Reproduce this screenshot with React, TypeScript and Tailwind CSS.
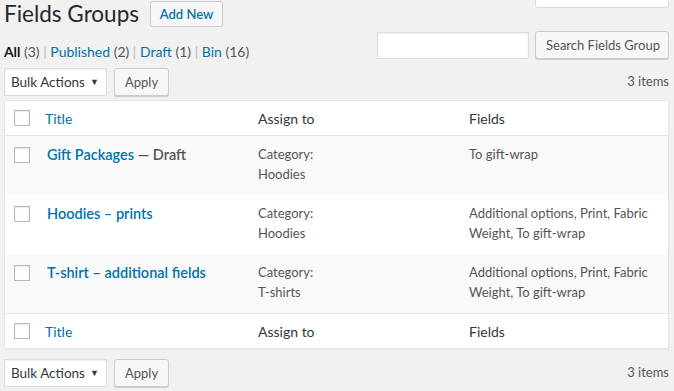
import React from 'react';

const font = "font-['Lato','Noto_Sans',sans-serif]";

const Checkbox = () => (
  <span className="block h-4 w-4 border border-[#b4b9be] bg-white shadow-[inset_0_1px_2px_rgba(0,0,0,0.1)]" />
);

const Button = ({ children, className = '' }: { children: React.ReactNode; className?: string }) => (
  <button
    className={`h-[28px] whitespace-nowrap rounded-[3px] border border-[#ccc] bg-[#f7f7f7] px-[10px] text-[13px] leading-[26px] text-[#555] shadow-[0_1px_0_#ccc] ${className}`}
  >
    {children}
  </button>
);

const TableNav = () => (
  <div className="flex h-[28px] items-center justify-between">
    <div className="flex items-center gap-[7px]">
      <div className="flex h-[28px] w-[103px] items-center justify-between whitespace-nowrap border border-[#ddd] bg-white pl-[6px] pr-[7px] text-[13.5px] text-[#32373c] shadow-[inset_0_1px_2px_rgba(0,0,0,0.07)]">
        <span>Bulk Actions</span>
        <span className="text-[9px]">▼</span>
      </div>
      <Button className="w-[55px] px-0">Apply</Button>
    </div>
    <span className="whitespace-nowrap text-[13px] text-[#555]">3 items</span>
  </div>
);

const rows = [
  { title: 'Gift Packages', state: ' — Draft', cat: 'Hoodies', fields: ['To gift-wrap'] },
  { title: 'Hoodies – prints', state: '', cat: 'Hoodies', fields: ['Additional options, Print, Fabric', 'Weight, To gift-wrap'] },
  { title: 'T-shirt – additional fields', state: '', cat: 'T-shirts', fields: ['Additional options, Print, Fabric', 'Weight, To gift-wrap'] },
];

const HeadRow = ({ top }: { top?: boolean }) => (
  <div
    className={`grid h-[35px] grid-cols-[30px_213px_211px_1fr] items-center text-[14px] text-[#32373c] ${
      top ? 'border-b border-[#e1e1e1]' : 'border-t border-[#e1e1e1]'
    }`}
  >
    <div className="pl-[9px]">
      <Checkbox />
    </div>
    <div className="px-[10px] text-[#0073aa]">Title</div>
    <div className="px-[10px]">Assign to</div>
    <div className="px-[10px]">Fields</div>
  </div>
);

export default function App() {
  return (
    <div className={`min-h-[391px] bg-[#f1f1f1] pl-[4px] pr-[5px] ${font}`}>
      <div className="flex h-[27px] items-start justify-between">
        <div className="flex items-center gap-[11px] pt-[1px]">
          <h1 className="whitespace-nowrap text-[22.5px] leading-[26px] text-[#23282d]">Fields Groups</h1>
          <span className="h-[26px] w-[73px] whitespace-nowrap rounded-[2px] border border-[#ccc] bg-[#f7f7f7] text-center text-[13px] font-semibold leading-[24px] text-[#0073aa]">
            Add New
          </span>
        </div>
        <div className="h-[8px] w-[134px] rounded-b-[3px] border-x border-b border-[#ddd] bg-white" />
      </div>

      <div className="mt-[4px] flex h-[27px] items-start justify-between">
        <div className="whitespace-nowrap pt-[13px] text-[14px] leading-[16px] text-[#bbb]">
          <span className="font-semibold text-black">All</span> <span className="text-[#555]">(3)</span> |{' '}
          <span className="text-[#0073aa]">Published</span> <span className="text-[#555]">(2)</span> |{' '}
          <span className="text-[#0073aa]">Draft</span> <span className="text-[#555]">(1)</span> |{' '}
          <span className="text-[#0073aa]">Bin</span> <span className="text-[#555]">(16)</span>
        </div>
        <div className="flex items-center gap-[6px]">
          <div className="h-[27px] w-[152px] border border-[#ddd] bg-white shadow-[inset_0_1px_2px_rgba(0,0,0,0.07)]" />
          <Button className="h-[27px] w-[134px] px-0">Search Fields Group</Button>
        </div>
      </div>

      <div className="mt-[10px]">
        <TableNav />
      </div>

      <div className="mt-[4px] border border-[#e5e5e5] bg-white shadow-[0_1px_1px_rgba(0,0,0,0.04)]">
        <HeadRow top />
        {rows.map((r, i) => (
          <div
            key={r.title}
            className={`grid h-[59px] grid-cols-[30px_213px_211px_1fr] items-start pt-[9px] text-[13px] leading-[19.5px] text-[#555] ${
              i % 2 === 0 ? 'bg-[#f9f9f9]' : 'bg-white'
            }`}
          >
            <div className="pl-[9px] pt-[2px]">
              <Checkbox />
            </div>
            <div className="whitespace-nowrap pl-[12px] pr-[10px] text-[14.5px] font-semibold">
              <span className="text-[#0073aa]">{r.title}</span>
              <span className="text-[#555]">{r.state}</span>
            </div>
            <div className="whitespace-nowrap px-[10px]">
              <div>Category:</div>
              <div>{r.cat}</div>
            </div>
            <div className="whitespace-nowrap px-[10px]">
              {r.fields.map((f) => (
                <div key={f}>{f}</div>
              ))}
            </div>
          </div>
        ))}
        <HeadRow />
      </div>

      <div className="mt-[10px]">
        <TableNav />
      </div>
    </div>
  );
}
